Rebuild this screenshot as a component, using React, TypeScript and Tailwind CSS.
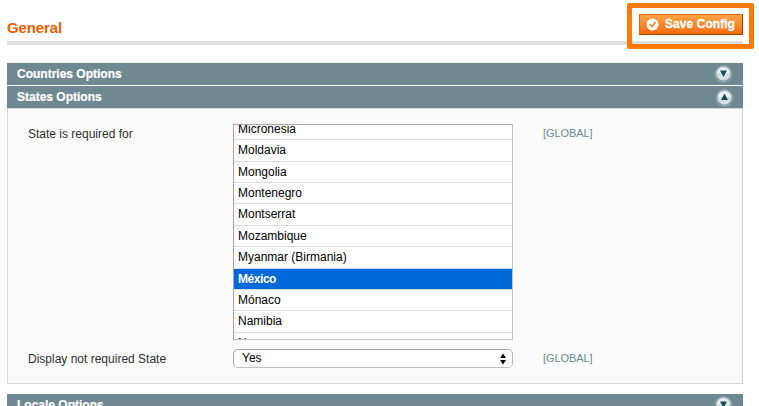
const ROWS: { name: string; row: string; label: string }[] = [
  { name: 'Micronesia', row: 'h-[15px] items-end', label: 'mb-0.5' },
  { name: 'Moldavia', row: 'h-[22px] items-center', label: '-mt-0.5' },
  { name: 'Mongolia', row: 'h-[21px] items-center', label: '' },
  { name: 'Montenegro', row: 'h-[21px] items-center', label: '' },
  { name: 'Montserrat', row: 'h-[22px] items-center', label: '-mt-0.5' },
  { name: 'Mozambique', row: 'h-[21px] items-center', label: '' },
  { name: 'Myanmar (Birmania)', row: 'h-[22px] items-center', label: '-mt-0.5' },
  { name: 'México', row: 'h-[21px] items-center bg-[#0069d9] font-bold text-white', label: 'tracking-[-0.45px]' },
  { name: 'Mónaco', row: 'h-[21px] items-center', label: '' },
  { name: 'Namibia', row: 'h-[22px] items-center', label: '-mt-0.5' },
  { name: 'Nauru', row: 'h-[21px] items-center', label: '' },
];

function Toggle({ up = false }: { up?: boolean }) {
  return (
    <svg width="19" height="19" viewBox="0 0 19 19" className={up ? 'mr-[9px] mt-0.5' : 'mr-2.5 mt-px'}>
      <circle cx="9.5" cy="10" r="9" fill="#8ba1a8" />
      <circle cx="9.5" cy="9.5" r="7" fill="#d3e0e3" />
      <path d="M3 9a6.7 6.7 0 0 1 13 0z" fill="#edf3f4" />
      <path d={up ? 'M9.5 5.5 13 12H6z' : 'M6 6.5h7L9.5 13z'} fill="#164a57" />
    </svg>
  );
}

function Bar({ title, up, className = '' }: { title: string; up?: boolean; className?: string }) {
  return (
    <div className={`flex h-[22px] shrink-0 items-start justify-between bg-[#6f8992] ${className}`}>
      <h3 className="pl-2.5 pt-[3px] text-[12px] leading-4 font-bold text-white [-webkit-text-stroke:0.2px_white]">{title}</h3>
      <Toggle up={up} />
    </div>
  );
}

export default function App() {
  return (
    <main className="relative h-[406px] w-[759px] overflow-hidden bg-white pl-[7px] font-['Liberation_Sans',Arial,sans-serif] text-[12px] text-[#2f2f2f]">
      <div className="w-[736px]">
        <header className="flex h-[45px] items-start justify-between border-b-4 border-[#dfdfdf]">
          <h1 className="pt-[18px] text-[15px] leading-5 font-bold tracking-[-0.1px] text-[#eb5e00]">General</h1>
          <button className="mt-3.5 flex h-[21px] w-[104px] items-center border border-t-[#ed6502] border-r-[#a04300] border-b-[#a04300] border-l-[#ed6502] bg-linear-to-b from-[#ffa344] to-[#f56b05] pl-1.5 text-[12px] font-bold whitespace-nowrap text-white">
            <svg width="13" height="13" viewBox="0 0 13 13" className="mr-1.5 shrink-0">
              <circle cx="6.5" cy="6.5" r="6" fill="#fff" />
              <path d="M3.8 6.2 6 8.4 9.4 3.9" fill="none" stroke="#f58220" strokeWidth="1.7" />
            </svg>
            <span className="-mt-px tracking-[0.06px] [-webkit-text-stroke:0.3px_white]">Save Config</span>
          </button>
        </header>

        <Bar title="Countries Options" className="mt-[18px]" />
        <Bar title="States Options" up className="mt-px" />
        <section className="h-[276px] border border-[#d6d6d6] bg-[#fafafa] pl-5 pt-[15px]">
          <div className="flex h-[225px] items-start">
            <label className="w-[205px] pt-0.5 leading-4">State is required for</label>
            <div className="h-[216px] w-[280px] overflow-hidden border border-t-[#a6a6a6] border-r-[#c4c4c4] border-b-[#c4c4c4] border-l-[#a6a6a6] bg-white text-black">
              {ROWS.map((r) => (
                <div key={r.name} className={`flex border-b border-[#dadada] pl-1 leading-4 ${r.row}`}>
                  <span className={r.label}>{r.name}</span>
                </div>
              ))}
            </div>
            <span className="ml-[30px] pt-px text-[11px] leading-4 tracking-[-0.08px] text-[#6f8992]">[GLOBAL]</span>
          </div>
          <div className="flex items-start">
            <label className="w-[205px] pt-0.5 leading-4">Display not required State</label>
            <div className="flex h-[19px] w-[280px] items-center justify-between rounded-[5px] border border-t-[#a6a6a6] border-r-[#b8b8b8] border-b-[#c0c0c0] border-l-[#a6a6a6] bg-white pl-2 pr-1.5 text-black">
              <span className="-mt-0.5">Yes</span>
              <svg width="6" height="12" viewBox="0 0 6 12">
                <path d="M3 0.5 6 5H0zM0 7h6L3 11.5z" fill="#000" />
              </svg>
            </div>
            <span className="ml-[30px] pt-px text-[11px] leading-4 tracking-[-0.08px] text-[#6f8992]">[GLOBAL]</span>
          </div>
        </section>
        <Bar title="Locale Options" className="mt-2.5" />
      </div>
      <div className="absolute top-[3px] left-[627px] h-[46px] w-[127px] rounded-[2px] border-5 border-[#ff7900]" />
    </main>
  );
}
